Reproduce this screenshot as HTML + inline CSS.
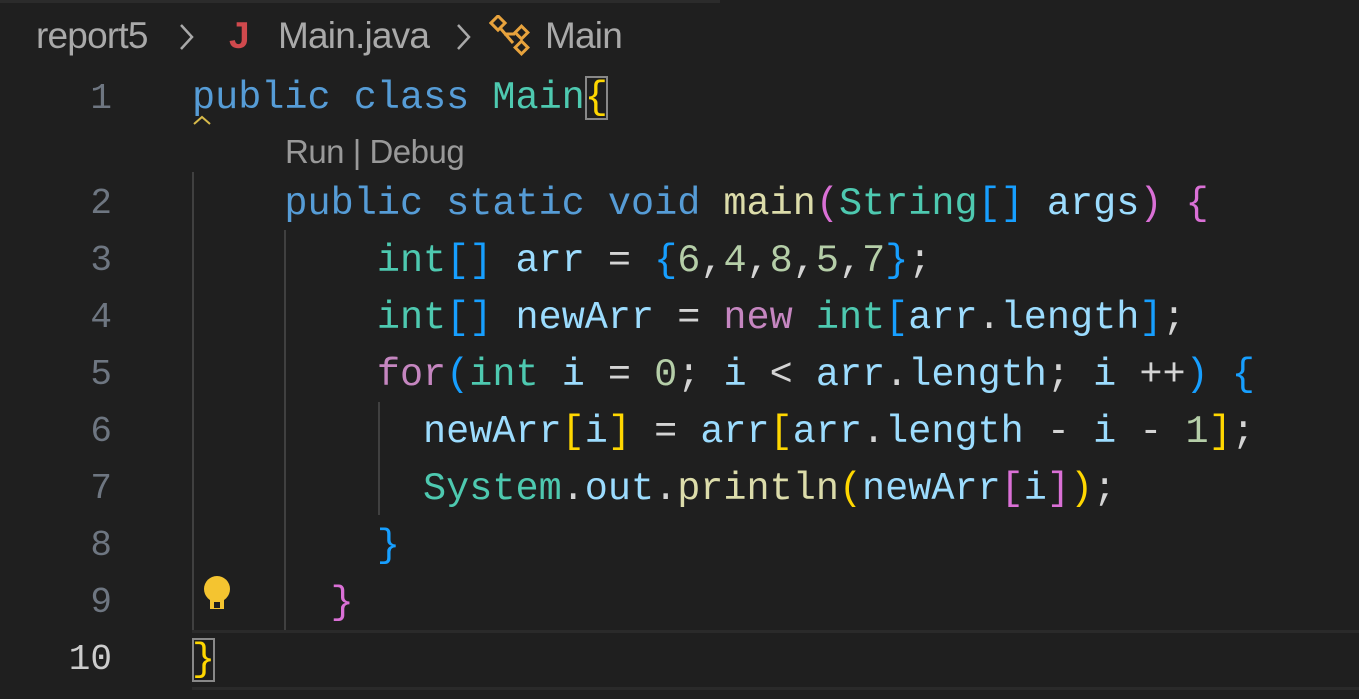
<!DOCTYPE html>
<html><head><meta charset="utf-8"><style>
body{margin:0;width:1359px;height:699px;background:#1f1f1f;overflow:hidden;position:relative;font-family:"Liberation Mono",monospace}
.tab{position:absolute;left:0;top:0;width:720px;height:3px;background:#2b2b2b}
.bc{position:absolute;top:15px;font-family:"Liberation Sans",sans-serif;font-size:37px;color:#a9a9a9;white-space:nowrap;letter-spacing:-0.8px}
.ch{position:absolute;top:20px}
.ln{position:absolute;width:112px;text-align:right;font-size:36px;color:#6e7681;left:0}
.code{position:absolute;left:192px;font-size:38.5px;white-space:pre;color:#d4d4d4}
.k{color:#569cd6}.t{color:#4ec9b0}.v{color:#9cdcfe}.n{color:#b5cea8}.c{color:#c586c0}.f{color:#dcdcaa}
.y{color:#ffd700}.p{color:#da70d6}.b{color:#179fff}
.g{position:absolute;width:2px;background:#404040}
</style></head><body>
<div class="tab"></div>
<div class="bc" style="left:36px">report5</div>
<svg class="ch" style="left:176px" width="20" height="34"><path d="M5 5l11 12-11 12" fill="none" stroke="#a9a9a9" stroke-width="2.5"/></svg>
<div class="bc" style="left:229px;color:#d0494d;font-weight:bold">J</div>
<div class="bc" style="left:278px">Main.java</div>
<svg class="ch" style="left:453px" width="20" height="34"><path d="M5 5l11 12-11 12" fill="none" stroke="#a9a9a9" stroke-width="2.5"/></svg>
<svg style="position:absolute;left:489px;top:15px" width="44" height="42" viewBox="0 0 44 42"><g fill="none" stroke="#e8a33d" stroke-width="3"><rect x="4" y="3" width="10" height="10" transform="rotate(45 9 8)"/><rect x="28" y="13" width="9" height="9" transform="rotate(45 32.5 17.5)"/><rect x="28" y="28" width="9" height="9" transform="rotate(45 32.5 32.5)"/><path d="M12 14l12 14M15 19h11"/></g></svg>
<div class="bc" style="left:545px">Main</div>
<div style="position:absolute;left:192px;top:630px;width:1167px;height:54px;border-top:3px solid #2a2a2a;border-bottom:3px solid #2a2a2a"></div>
<div class="g" style="left:192px;top:172px;height:458px"></div>
<div class="g" style="left:284px;top:230px;height:400px"></div>
<div class="g" style="left:378px;top:402px;height:113px"></div>
<div class="ln" style="top:78px">1</div>
<div class="ln" style="top:183px">2</div>
<div class="ln" style="top:240px">3</div>
<div class="ln" style="top:297px">4</div>
<div class="ln" style="top:354px">5</div>
<div class="ln" style="top:411px">6</div>
<div class="ln" style="top:468px">7</div>
<div class="ln" style="top:525px">8</div>
<div class="ln" style="top:582px">9</div>
<div class="ln" style="top:639px;color:#ccc">10</div>
<div class="code" style="top:76px"><span class="k">public</span> <span class="k">class</span> <span class="t">Main</span><span class="y" style="outline:2px solid #888;outline-offset:-2px">{</span></div>
<svg style="position:absolute;left:192px;top:114px" width="24" height="12"><path d="M2 10l8-7 8 7" fill="none" stroke="#d7ba4a" stroke-width="2"/></svg>
<div style="position:absolute;left:285px;top:133px;font-family:'Liberation Sans',sans-serif;font-size:33px;color:#999;letter-spacing:-0.5px">Run | Debug</div>
<div class="code" style="top:182px">    <span class="k">public</span> <span class="k">static</span> <span class="k">void</span> <span class="f">main</span><span class="p">(</span><span class="t">String</span><span class="b">[]</span> <span class="v">args</span><span class="p">)</span> <span class="p">{</span></div>
<div class="code" style="top:239px">        <span class="t">int</span><span class="b">[]</span> <span class="v">arr</span> = <span class="b">{</span><span class="n">6</span>,<span class="n">4</span>,<span class="n">8</span>,<span class="n">5</span>,<span class="n">7</span><span class="b">}</span>;</div>
<div class="code" style="top:296px">        <span class="t">int</span><span class="b">[]</span> <span class="v">newArr</span> = <span class="c">new</span> <span class="t">int</span><span class="b">[</span><span class="v">arr</span>.<span class="v">length</span><span class="b">]</span>;</div>
<div class="code" style="top:353px">        <span class="c">for</span><span class="b">(</span><span class="t">int</span> <span class="v">i</span> = <span class="n">0</span>; <span class="v">i</span> &lt; <span class="v">arr</span>.<span class="v">length</span>; <span class="v">i</span> ++<span class="b">)</span> <span class="b">{</span></div>
<div class="code" style="top:410px">          <span class="v">newArr</span><span class="y">[</span><span class="v">i</span><span class="y">]</span> = <span class="v">arr</span><span class="y">[</span><span class="v">arr</span>.<span class="v">length</span> - <span class="v">i</span> - <span class="n">1</span><span class="y">]</span>;</div>
<div class="code" style="top:467px">          <span class="t">System</span>.<span class="v">out</span>.<span class="f">println</span><span class="y">(</span><span class="v">newArr</span><span class="p">[</span><span class="v">i</span><span class="p">]</span><span class="y">)</span>;</div>
<div class="code" style="top:524px">        <span class="b">}</span></div>
<div class="code" style="top:581px">      <span class="p">}</span></div>
<svg style="position:absolute;left:201px;top:575px" width="32" height="42" viewBox="0 0 32 42"><circle cx="16" cy="14" r="13" fill="#f4c430"/><rect x="9" y="20" width="14" height="14" fill="#f4c430"/><rect x="13" y="27" width="6" height="6" fill="#1f1f1f"/></svg>
<div class="code" style="top:638px"><span class="y" style="outline:2px solid #888;outline-offset:-2px">}</span></div>
</body></html>
